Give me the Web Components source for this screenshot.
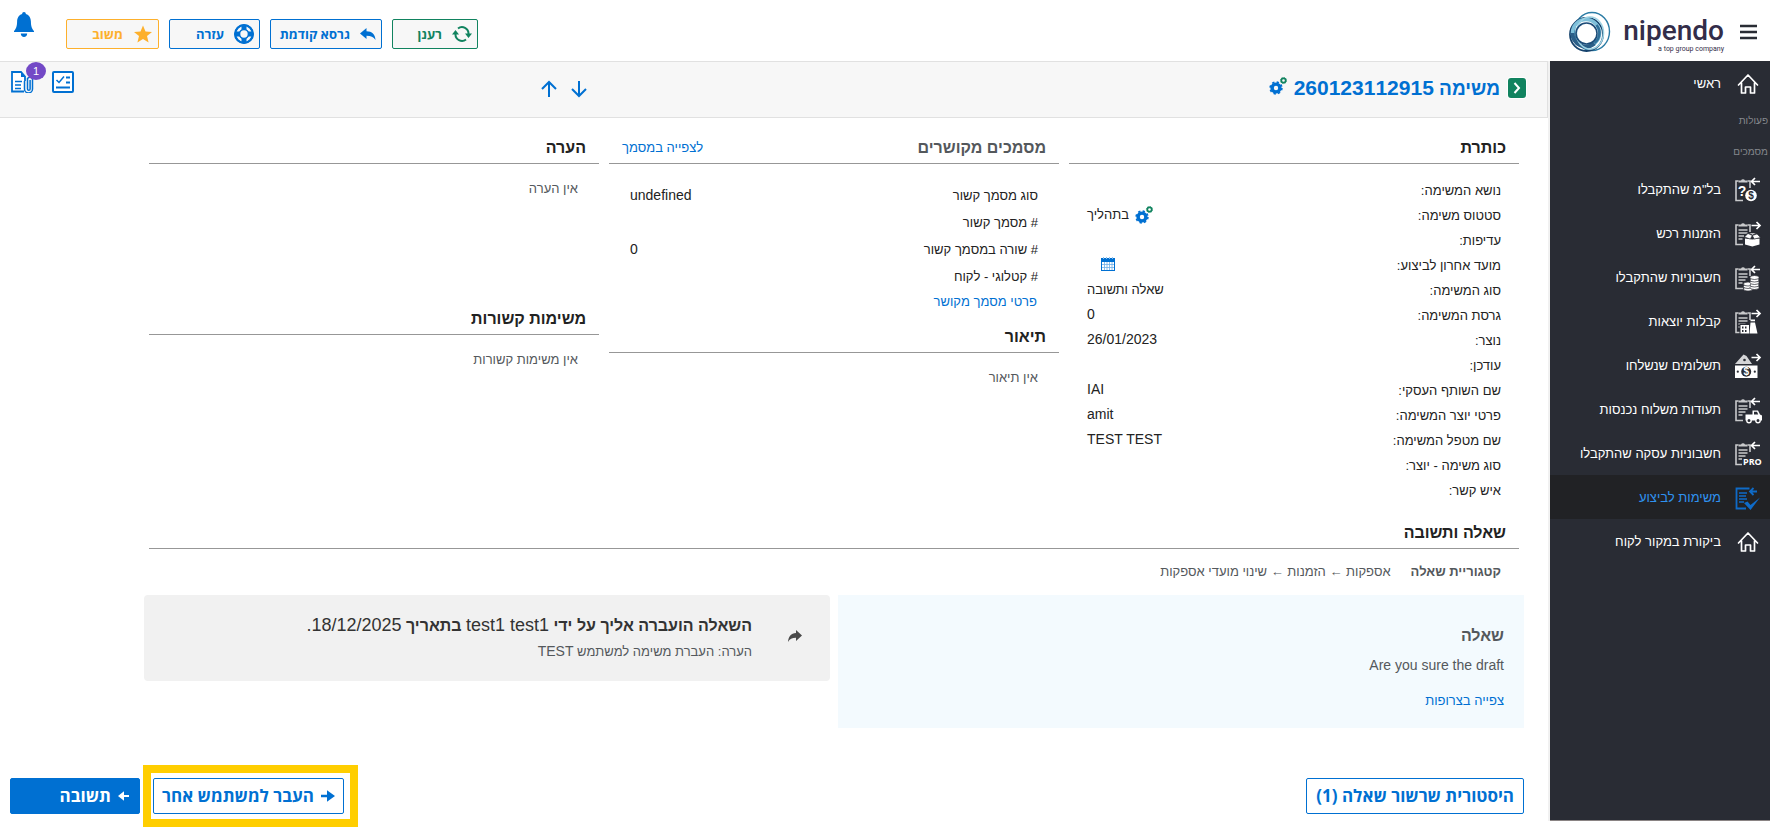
<!DOCTYPE html>
<html lang="he" dir="rtl">
<head>
<meta charset="utf-8">
<meta name="viewport" content="width=device-width, initial-scale=1">
<title>nipendo - משימה 260123112915</title>
<style>
  html, body { margin: 0; background: #fff; }
  body {
    --blue: #0070d2;
    --green: #11835f;
    --line: #979797;
    font-family: "Liberation Sans", Arial, sans-serif;
    font-size: 13px;
    line-height: 24px;
    color: #222;
  }
</style>
</head>
<body>
<task-app></task-app>

<script>
const clipboard = `<path d="M4.500 5H2v19.500h7M13.500 5H16v7" fill="none" stroke="#c9cacc" stroke-width="1.600"/><path d="M4.500 6.500V4.500h2.500a2.200 2.200 0 0 1 4 0h2.500v2z" fill="#c9cacc"/>`;
const lines = `<path d="M4.500 10h9M4.500 13h9M4.500 16h7M4.500 19h4" stroke="#c9cacc" stroke-width="1.400"/>`;
const arrowIn = `<path d="M26 5.500h-8M21 2l-3.500 3.500L21 9" fill="none" stroke="#fff" stroke-width="1.700"/>`;
const arrowOut = `<path d="M17.500 5.500h8M22.500 2L26 5.500 22.500 9" fill="none" stroke="#fff" stroke-width="1.700"/>`;
const bg = '#292c34';

const ICONS = {
  menu: ['0 0 18 16', `<path d="M0 2h17M0 8h17M0 14h17" stroke="#292c34" stroke-width="2.400"/>`],
  bell: ['0 0 20 26', `<path fill="#0070d2" d="M10 0c1.200 0 1.800.8 1.900 1.900C15.300 2.800 16.800 6 16.900 9.500c.1 5 1 7.300 3.100 9.500v1H0v-1c2.100-2.200 3-4.500 3.100-9.500C3.200 6 4.700 2.800 8.100 1.900 8.200.8 8.800 0 10 0zM6.800 21.500h6.400c0 2-1.400 3.500-3.200 3.500s-3.200-1.500-3.200-3.500z"/>`],
  refresh: ['0 0 20 16', `<g fill="none" stroke="#11835f" stroke-width="2"><path d="M6 2.500A6.500 6.500 0 0 1 16.500 8v1"/><path d="M14 13.500A6.500 6.500 0 0 1 3.500 8V7"/></g><path fill="#11835f" d="M13 7.500h7L16.500 12zM0 8.500h7L3.500 4z"/>`],
  reply: ['0 0 16 12', `<path fill="#0070d2" d="M6.500 0v3.200C12 3.200 15.200 6.500 15.500 12 13.500 9 11 7.700 6.500 7.700V11L0 5.500z"/>`],
  help: ['0 0 20 20', `<circle cx="10" cy="10" r="10" fill="#0070d2"/><circle cx="10" cy="10" r="6.300" fill="none" stroke="#f7f7f7" stroke-width="4"/><circle cx="10" cy="10" r="8.700" fill="none" stroke="#0070d2" stroke-width="2"/><g stroke="#0070d2" stroke-width="5"><path d="M10 1v5M10 14v5M1 10h5M14 10h5"/></g><circle cx="10" cy="10" r="4.500" fill="#f7f7f7" stroke="#0070d2" stroke-width="1.600"/>`],
  star: ['0 0 20 20', `<path fill="#fdb02c" d="M10 1.500l2.500 5.900 6.500.5-5 4.200 1.600 6.300L10 15l-5.600 3.400L6 12.100 1 7.900l6.500-.5z"/>`],
  chevron: ['0 0 20 22', `<rect width="20" height="22" rx="4" fill="#fff"/><rect x="1" y="1" width="18" height="20" rx="3" fill="#11835f"/><path d="M7.500 6l4.500 5-4.500 5" fill="none" stroke="#fff" stroke-width="2"/>`],
  gears: ['0 0 18 18', `<circle cx="7" cy="11" r="3.900" fill="none" stroke="#0070d2" stroke-width="3.400"/><circle cx="7" cy="11" r="5.900" fill="none" stroke="#0070d2" stroke-width="1.600" stroke-dasharray="2.320 2.310"/><circle cx="14.500" cy="3.500" r="2.200" fill="none" stroke="#11835f" stroke-width="1.700"/><circle cx="14.500" cy="3.500" r="3.100" fill="none" stroke="#11835f" stroke-width=".8" stroke-dasharray="1.200 1.200"/>`],
  up: ['0 0 18 18', `<path d="M9 17V2M2 9l7-7 7 7" fill="none" stroke="#0070d2" stroke-width="2"/>`],
  down: ['0 0 18 18', `<path d="M9 1v15M2 9l7 7 7-7" fill="none" stroke="#0070d2" stroke-width="2"/>`],
  checklist: ['0 0 22 22', `<rect x="1" y="1" width="20" height="20" rx="1" fill="#fff" stroke="#0070d2" stroke-width="2"/><path d="M4 16.500h14M14 6.500h4M14 11.500h4" stroke="#0070d2" stroke-width="2"/><path d="M4.500 9l2.500 2.500 5-6" fill="none" stroke="#0070d2" stroke-width="1.500"/>`],
  attach: ['0 0 23 22', `<path d="M13 20.500H1V1h9l4 4.500V10" fill="#fff" stroke="#0070d2" stroke-width="1.800"/><path d="M10 1v5h4.500" fill="#0070d2"/><path d="M4 10.500h7M4 14h6M4 17.500h6" stroke="#0070d2" stroke-width="1.400"/><path d="M13.500 10v8a4 4 0 0 0 8 0V7.500a3 3 0 0 0-5 0V18a1.300 1.300 0 0 0 2.600 0V9" fill="none" stroke="#0070d2" stroke-width="1.500"/>`],
  calendar: ['0 0 14 14', `<path fill="#0070d2" d="M0 1h14v13H0z"/><path d="M1 5h12v8H1z" fill="#fff"/><path d="M1 7.500h12M1 10.500h12M3.500 5v8M6 5v8M8.500 5v8M11 5v8" stroke="#6fb0e8" stroke-width=".8"/><path d="M2.500 0v2M5.500 0v2M8.500 0v2M11.500 0v2" stroke="#8cc1ee"/>`],
  forward: ['0 0 14 12', `<path fill="#4a4a4a" d="M8 0v3C3 3.400.5 6.500 0 12c1.700-3 4-4.200 8-4.200V11l6-5.500z"/>`],
  right: ['0 0 14 12', `<path fill="#0070d2" d="M0 4.700h6V.2L14 6l-8 5.800V7.300H0z"/>`],
  left: ['0 0 12 10', `<path fill="#fff" d="M11 3.900H6V.2L0 5l6 4.800V6.100h5z"/>`],
  home: ['0 0 28 28', `<path d="M4.500 15L14 5l9.500 10M7.500 13v10h4v-6h5v6h4V13" fill="none" stroke="#fff" stroke-width="1.700" stroke-linejoin="round" stroke-linecap="round"/>`],
  rfq: ['0 0 28 28', clipboard + arrowIn + `<text x="8" y="20" text-anchor="middle" font-size="14" font-weight="700" fill="#fff">?</text><circle cx="17" cy="19.500" r="6.800" fill="${bg}"/><circle cx="17" cy="19.500" r="5.800" fill="#fff"/><text x="17" y="23.200" text-anchor="middle" font-size="10" font-weight="700" fill="${bg}">$</text>`],
  orders: ['0 0 28 28', clipboard + lines + arrowOut + `<path d="M10 15l5-2.500h8l4.500 3.500-1 9-9.500 2-7-2z" fill="${bg}"/><path fill="#fff" d="M11 18.500l7.300 1 7.200-1v6l-7.200 2-7.300-2z"/><path fill="#fff" d="M10.500 17l3.500-3.500 4.300 2-2 3.500zM26.500 17.500L23 14l-4.700 1.500 2 3.500zM14.500 13h8l-4 2z" stroke="${bg}" stroke-width=".6"/>`],
  invoices: ['0 0 28 28', clipboard + lines + arrowIn + `<path d="M9 17h7v-5h9v15H9z" fill="${bg}"/><g fill="#fff" stroke="${bg}" stroke-width=".7"><ellipse cx="14" cy="25" rx="4.500" ry="2"/><ellipse cx="14" cy="22.500" rx="4.500" ry="2"/><ellipse cx="14" cy="20" rx="4.500" ry="2"/><ellipse cx="20.500" cy="23.500" rx="4.500" ry="2"/><ellipse cx="20.500" cy="21" rx="4.500" ry="2"/><ellipse cx="20.500" cy="18.500" rx="4.500" ry="2"/><ellipse cx="20.500" cy="16" rx="4.500" ry="2"/><ellipse cx="20.500" cy="13.500" rx="4.500" ry="2"/></g>`],
  receipts: ['0 0 28 28', clipboard + lines + arrowOut + `<path d="M5.500 15.500h10v11h-10z" fill="${bg}"/><path fill="#fff" fill-rule="evenodd" d="M6.500 17h8.500v8.500H6.500zM8 18.500v2h1.500v-2zm3 0v2h1.500v-2zM8 22v2h1.500v-2zm3 0v2h1.500v-2z"/><path fill="#fff" d="M16.500 14.500h4.500l2.500 11h-8zM16.500 11.500h4.500v1.800h-4.500z"/>`],
  payments: ['0 0 28 28', arrowOut + `<path fill="#d4d5d7" d="M1 12L9.500 2.500l3 1.500 5.500 8z"/><circle cx="10.500" cy="8" r="1.300" fill="${bg}"/><path fill="#fff" d="M1 13.500h22.500V26H1z"/><circle cx="12.200" cy="19.700" r="5" fill="${bg}"/><text x="12.200" y="23.400" text-anchor="middle" font-size="10" font-weight="700" fill="#fff">$</text><circle cx="3.800" cy="19.700" r="1.100" fill="${bg}"/><circle cx="20.800" cy="19.700" r="1.100" fill="${bg}"/>`],
  deliveries: ['0 0 28 28', clipboard + lines + arrowIn + `<path d="M10 17h9v-4h9v14H10z" fill="${bg}"/><path fill="#fff" d="M11.500 18.500h7v-4H24l2 4 2 1v5H11.500z"/><path fill="${bg}" d="M20 15.800h3l1.200 2.700H20z"/><circle cx="15" cy="24.500" r="2.200" fill="${bg}" stroke="#fff" stroke-width="1.400"/><circle cx="24" cy="24.500" r="2.200" fill="${bg}" stroke="#fff" stroke-width="1.400"/>`],
  proforma: ['0 0 28 28', clipboard + lines + arrowIn + `<path d="M8 17h20v9H8z" fill="${bg}"/><text x="9" y="25" font-family="Open Sans, sans-serif" font-size="9" font-weight="700" fill="#fff">PRO</text>`],
  tasks: ['0 0 28 28', `<g fill="none" stroke="#0f6bc8"><path d="M15.500 4.500H2.500v20h9.500" stroke-width="1.800"/><path d="M5 9h8M5 12h7M5 15h8M5 18h5" stroke-width="1.400"/><path d="M23 7.500h-7M19.500 4L16 7.500l3.500 3.500" stroke-width="1.800"/></g><path fill="#0f6bc8" d="M10 19l3.500-1.500 3 3.500 9.500-7.500-9.500 12.500z"/>`],
  ring: ['0 0 42 42', `<g fill="none"><ellipse cx="23" cy="20.500" rx="17.500" ry="19" stroke="#2c7ca5" stroke-width="1.400"/><ellipse cx="17.500" cy="23.500" rx="16.500" ry="16.500" stroke="#16436d" stroke-width="1.800"/><circle cx="17" cy="22" r="13.500" stroke="#7fc0da" stroke-width="3.600"/><path d="M3.500 22a13.500 13.500 0 0 0 22 10.500" stroke="#2b5f88" stroke-width="4"/><ellipse cx="21" cy="22" rx="13.500" ry="16" stroke="#9fd3e4" stroke-width="1.600"/><path d="M27.500 14a12.500 12.500 0 0 1-2 18" stroke="#2f6f99" stroke-width="2.600"/><circle cx="17.500" cy="22.500" r="10.500" stroke="#1c4c78" stroke-width="1.600"/></g>`],
};

/* Registers an element whose shadow root is cloned from a template. */
function define(name, css, html, setup) {
  const template = document.createElement('template');
  template.innerHTML = `<style>*{box-sizing:border-box}:host{display:block;box-sizing:border-box}a{color:var(--blue);text-decoration:none}button{font:inherit;color:inherit;cursor:pointer}h1,h2,h3,p,dl,dd,dt{margin:0;padding:0}${css}</style>${html}`;
  customElements.define(name, class extends HTMLElement {
    connectedCallback() {
      if (this.shadowRoot) return;
      this.attachShadow({ mode: 'open' }).append(template.content.cloneNode(true));
      if (setup) setup(this, this.shadowRoot);
    }
  });
}

define('ui-icon', ':host{flex:none;direction:ltr}svg{display:block}', '', (el, root) => {
  const [box, shape] = ICONS[el.getAttribute('name')];
  const [, , w, h] = box.split(' ');
  root.innerHTML += `<svg viewBox="${box}" width="${w}" height="${h}" aria-hidden="true">${shape}</svg>`;
});

define('tool-button', `
  button{display:flex;align-items:center;gap:10px;width:100%;height:30px;padding:0 5px;border:1px solid currentColor;border-radius:2px;background:#f7f7f7;font:700 13px/20px "Open Sans",sans-serif;white-space:nowrap}
  :host{color:var(--blue);width:91px}
  :host([tone=green]){color:var(--green);width:86px}
  :host([tone=amber]){color:#fdb02c;width:93px}
  :host([wide]){width:112px}`,
  '<button type="button"><slot name="icon"></slot><slot></slot></button>');

define('brand-logo', `
  :host{display:flex;align-items:center;gap:12px;direction:ltr;color:#332d49}
  div{display:flex;flex-direction:column;align-items:flex-end;padding-top:6px}
  b{font:500 28px/28px Roboto,sans-serif}
  small{font:7px/8px Roboto,sans-serif}`,
  '<ui-icon name="ring"></ui-icon><div><b>nipendo</b><small>a top group company</small></div>');

define('app-header', `
  :host{display:flex;align-items:center;justify-content:space-between;height:61px;padding:2px 12px 0 14px}
  .start,.tools{display:flex;align-items:center}
  .start{gap:16px}
  .tools{gap:10px;padding-top:4px}
  .plain{border:0;background:none;padding:0}
  .bell{align-self:flex-start;margin:10px 32px 0 0}
  .end{display:flex;height:100%}`,
  `<div class="start"><button class="plain" aria-label="תפריט"><ui-icon name="menu"></ui-icon></button><brand-logo></brand-logo></div>
   <div class="end"><div class="tools">
     <tool-button tone="green"><ui-icon slot="icon" name="refresh"></ui-icon>רענן</tool-button>
     <tool-button wide><ui-icon slot="icon" name="reply"></ui-icon>גרסא קודמת</tool-button>
     <tool-button><ui-icon slot="icon" name="help"></ui-icon>עזרה</tool-button>
     <tool-button tone="amber"><ui-icon slot="icon" name="star"></ui-icon>משוב</tool-button>
   </div><button class="plain bell" aria-label="התראות"><ui-icon name="bell"></ui-icon></button></div>`);

define('nav-item', `
  a{display:flex;align-items:center;gap:13px;height:44px;padding:2px 8px 0;color:#fff;white-space:nowrap}
  :host([active]) a{background:#212225;color:#2f92f0}`,
  '<a href="#"><slot></slot></a>', (el, root) => {
    const icon = document.createElement('ui-icon');
    icon.setAttribute('name', el.getAttribute('icon'));
    root.querySelector('a').prepend(icon);
  });

define('side-nav', `
  :host{flex:none;width:220px;background:#292c34;border-bottom:1px solid #8a8484;margin-bottom:6px}
  h3{font-size:10px;font-weight:400;line-height:31px;color:#85888d;padding:0 2px}`,
  `<nav>
    <nav-item icon="home">ראשי</nav-item>
    <h3>פעולות</h3><h3>מסמכים</h3>
    <nav-item icon="rfq">בל"מ שהתקבלו</nav-item>
    <nav-item icon="orders">הזמנות רכש</nav-item>
    <nav-item icon="invoices">חשבוניות שהתקבלו</nav-item>
    <nav-item icon="receipts">קבלות יוצאות</nav-item>
    <nav-item icon="payments">תשלומים שנשלחו</nav-item>
    <nav-item icon="deliveries">תעודות משלוח נכנסות</nav-item>
    <nav-item icon="proforma">חשבוניות עסקה שהתקבלו</nav-item>
    <nav-item icon="tasks" active>משימות לביצוע</nav-item>
    <nav-item icon="home">ביקורת במקור לקוח</nav-item>
  </nav>`);

define('task-bar', `
  :host{display:grid;grid-template-columns:1fr auto 35%;height:57px;background:#f7f7f7;border:1px solid #e1e1e1;border-left:0;padding-right:20px}
  button{border:0;background:none;padding:0}
  .title{display:flex;align-items:center;gap:7px;height:52px}
  .title ui-icon{margin-bottom:4px}
  .title button ui-icon{margin:0}
  h1{font-size:19px;line-height:26px;color:var(--blue)}
  h1 span{font-size:21px}
  .steps{display:flex;gap:12px;align-items:center;height:54px;padding-left:6px}
  .views{display:flex;gap:18px;justify-content:flex-end;align-items:flex-start;padding:9px 0 0 11px}
  .count{position:relative}
  .badge{position:absolute;left:15px;top:-9px;width:20px;height:18px;border-radius:50%;background:#7349c6;color:#fff;font-size:11px;line-height:18px;text-align:center}`,
  `<div class="title"><button aria-label="פתיחה"><ui-icon name="chevron"></ui-icon></button><h1>משימה <span>260123112915</span></h1><ui-icon name="gears"></ui-icon></div>
   <div class="steps"><button aria-label="הבא"><ui-icon name="down"></ui-icon></button><button aria-label="הקודם"><ui-icon name="up"></ui-icon></button></div>
   <div class="views"><button aria-label="רשימה"><ui-icon name="checklist"></ui-icon></button><button class="count" aria-label="צרופות"><ui-icon name="attach"></ui-icon><span class="badge">1</span></button></div>`);

define('info-section', `
  header{display:flex;justify-content:space-between;align-items:center;height:34px;padding:2px 13px 0;border-bottom:1px solid var(--line)}
  h2{font-size:16px;line-height:24px}
  :host([muted]) h2{color:#54585c}
  :host([tall]){min-height:171px}`,
  '<header><h2></h2><slot name="link"></slot></header><slot></slot>', (el, root) => {
    root.querySelector('h2').textContent = el.getAttribute('heading');
  });

define('info-row', `
  :host{display:flex;justify-content:space-between;height:25px;line-height:25px;padding:0 18px}
  :host([roomy]){height:27px;line-height:27px;padding:0 21px}
  dl{display:contents}
  dd{font-size:14px;margin-top:-1px}
  :host([roomy]) dd{margin:0}`,
  '<dl><dt></dt><dd><slot></slot></dd></dl>', (el, root) => {
    root.querySelector('dt').textContent = el.getAttribute('label');
  });

define('question-card', `
  :host{background:#f3fafe;padding:29px 20px 15px;color:#54585c}
  h3{font-size:16px;margin-bottom:5px}
  p{font-size:14px;margin-bottom:12px}`,
  '<h3>שאלה</h3><p>Are you sure the draft</p><a href="#">צפייה בצרופות</a>');

define('transfer-note', `
  :host{align-self:start;display:flex;align-items:center;gap:36px;background:#f1f1f1;border-radius:4px;padding:19px 28px 17px}
  ui-icon{margin-bottom:6px}
  h3{font-size:16px;color:#333;margin-bottom:2px}
  h3 span{font-size:18px;font-weight:400;line-height:18px}
  p{color:#54585c}
  p span{font-size:14px;line-height:14px}`,
  `<ui-icon name="forward"></ui-icon>
   <div><h3>השאלה הועברה אליך על ידי <span>test1 test1</span> בתאריך <span>18/12/2025.</span></h3>
   <p>הערה: העברת משימה למשתמש <span>TEST</span></p></div>`);

define('action-button', `
  button{display:flex;align-items:center;gap:7px;height:36px;width:100%;padding:0 9px;border:1px solid var(--blue);border-radius:2px;background:#fff;color:var(--blue);font:700 17px/24px "Open Sans",sans-serif;white-space:nowrap}
  :host([primary]) button{width:130px;background:var(--blue);color:#fff}
  :host([icon]) button{padding:0 8px}`,
  '<button type="button"><slot></slot></button>');

define('action-bar', `
  :host{display:flex;justify-content:space-between;align-items:center;padding:0 24px 0 10px;margin-top:auto}
  .end{display:flex;align-items:center;gap:3px}
  .highlight{border:8px solid #ffce00;padding:5px 6px 5px 2px}`,
  `<action-button>היסטורית שרשור שאלה (1)</action-button>
   <div class="end"><div class="highlight"><action-button icon><ui-icon name="right"></ui-icon>העבר למשתמש אחר</action-button></div>
   <action-button primary><ui-icon name="left"></ui-icon>תשובה</action-button></div>`);

define('task-details', `
  :host{padding:12px 24px 0 144px}
  .columns{display:grid;grid-template-columns:repeat(3,1fr);gap:10px;padding:0 5px}
  .rows{padding-top:14px}
  .linked{padding:18px 0 5px}
  .linked a{padding:0 22px}
  .empty{padding:13px 21px 0;color:#54585c}
  .status{display:flex;align-items:center;gap:6px;font-size:13px}
  .date{margin:5px 0 0 14px}
  .he{font-size:13px}
  .qa{margin:12px 5px 0}
  .path{display:flex;gap:20px;padding:11px 18px;color:#54585c}
  .cards{display:grid;grid-template-columns:1fr 1fr;gap:8px}`,
  `<div class="columns">
    <info-section heading="כותרת"><div class="rows">
      <info-row label="נושא המשימה:"></info-row>
      <info-row label="סטטוס משימה:"><span class="status"><ui-icon name="gears"></ui-icon>בתהליך</span></info-row>
      <info-row label="עדיפות:"></info-row>
      <info-row label="מועד אחרון לביצוע:"><ui-icon class="date" name="calendar"></ui-icon></info-row>
      <info-row label="סוג המשימה:"><span class="he">שאלה ותשובה</span></info-row>
      <info-row label="גרסת המשימה:">0</info-row>
      <info-row label="נוצר:">26/01/2023</info-row>
      <info-row label="עודכן:"></info-row>
      <info-row label="שם השותף העסקי:">IAI</info-row>
      <info-row label="פרטי יוצר המשימה:">amit</info-row>
      <info-row label="שם מטפל המשימה:">TEST TEST</info-row>
      <info-row label="סוג משימה - יוצר:"></info-row>
      <info-row label="איש קשר:"></info-row>
    </div></info-section>
    <div>
      <info-section heading="מסמכים מקושרים" muted><a slot="link" href="#">לצפייה במסמך</a>
        <div class="linked">
          <info-row roomy label="סוג מסמך קשור">undefined</info-row>
          <info-row roomy label="# מסמך קשור"></info-row>
          <info-row roomy label="# שורה במסמך קשור">0</info-row>
          <info-row roomy label="# קטלוגי - לקוח"></info-row>
          <a href="#">פרטי מסמך מקושר</a>
        </div>
      </info-section>
      <info-section heading="תיאור"><p class="empty">אין תיאור</p></info-section>
    </div>
    <div>
      <info-section heading="הערה" tall><p class="empty">אין הערה</p></info-section>
      <info-section heading="משימות קשורות"><p class="empty">אין משימות קשורות</p></info-section>
    </div>
  </div>
  <info-section class="qa" heading="שאלה ותשובה">
    <div class="path"><b>קטגוריית שאלה</b><span>אספקות ← הזמנות ← שינוי מועדי אספקות</span></div>
  </info-section>
  <div class="cards"><question-card></question-card><transfer-note></transfer-note></div>`);

define('task-app', `
  :host{display:flex;flex-direction:column;min-height:100vh}
  .body{display:flex;flex:1}
  main{display:flex;flex-direction:column;flex:1}
  side-nav{box-shadow:-2px 0 0 #f1f1f1;margin-left:2px}`,
  '<app-header></app-header><div class="body"><side-nav></side-nav><main><task-bar></task-bar><task-details></task-details><action-bar></action-bar></main></div>');
</script>
</body>
</html>
